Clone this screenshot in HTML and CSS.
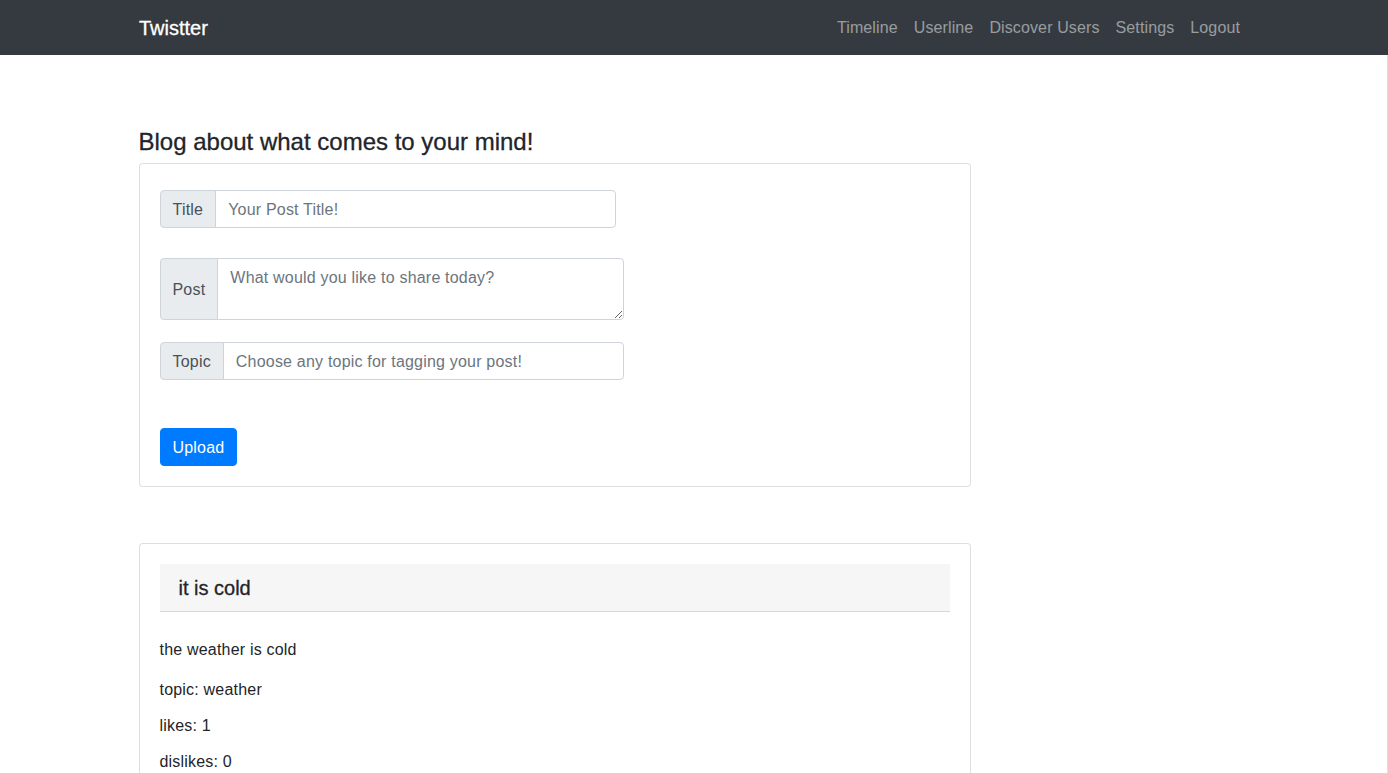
FILE: index.html
```html
<!DOCTYPE html>
<html lang="en">
<head>
<meta charset="utf-8">
<title>Twistter</title>
<link rel="stylesheet" href="styles.css">
</head>
<body>
<nav class="navbar">
  <div class="container nav-inner">
    <a class="brand" href="#">Twistter</a>
    <ul class="nav-links">
      <li><a href="#">Timeline</a></li>
      <li><a href="#">Userline</a></li>
      <li><a href="#">Discover Users</a></li>
      <li><a href="#">Settings</a></li>
      <li><a href="#">Logout</a></li>
    </ul>
  </div>
</nav>
<main class="page">
  <div class="container">
    <h4 class="page-title">Blog about what comes to your mind!</h4>
    <div class="card form-card">
      <form class="card-body post-form">
        <div class="input-group title-group">
          <span class="addon">Title</span>
          <input class="control" type="text" placeholder="Your Post Title!">
        </div>
        <div class="input-group post-group">
          <span class="addon">Post</span>
          <textarea class="control" rows="2" placeholder="What would you like to share today?"></textarea>
        </div>
        <div class="input-group topic-group">
          <span class="addon">Topic</span>
          <input class="control" type="text" placeholder="Choose any topic for tagging your post!">
        </div>
        <button class="btn-primary" type="button">Upload</button>
      </form>
    </div>
    <div class="card post-card">
      <div class="card-body">
        <div class="post-header">it is cold</div>
        <p class="post-text">the weather is cold</p>
        <div class="meta">
          <p>topic: weather</p>
          <p>likes: 1</p>
          <p>dislikes: 0</p>
        </div>
      </div>
    </div>
  </div>
</main>
</body>
</html>
```
FILE: styles.css
```css
* { box-sizing: border-box; }
html, body { margin: 0; padding: 0; }
body {
  font-family: "Liberation Sans", Arial, sans-serif;
  font-size: 16px;
  line-height: 1.5;
  color: #212529;
  background: #fff;
  overflow: hidden;
  letter-spacing: 0.2px;
}
.container {
  max-width: 1140px;
  margin: 0 auto;
  padding: 0 15px;
}
.navbar {
  background: #343a40;
  height: 55px;
}
.nav-inner {
  display: flex;
  align-items: center;
  justify-content: space-between;
  height: 55px;
}
.brand {
  color: #fff;
  text-decoration: none;
  font-size: 20px;
  line-height: 30px;
  letter-spacing: 0;
  -webkit-text-stroke: 0.3px #fff;
}
.nav-links {
  display: flex;
  list-style: none;
  margin: 0 1px 0 0;
  padding: 0;
}
.nav-links a {
  display: block;
  padding: 8px;
  color: rgba(255,255,255,.5);
  text-decoration: none;
  line-height: 24px;
  letter-spacing: 0.12px;
}
.page {
  border-right: 1px solid #dedede;
  min-height: 718px;
}
.page-title {
  margin: 0;
  padding-top: 72px;
  font-size: 24px;
  font-weight: 500;
  line-height: 29px;
  margin-bottom: 7px;
  letter-spacing: 0;
  -webkit-text-stroke: 0.3px #212529;
}
.card {
  width: 832px;
  border: 1px solid rgba(0,0,0,.125);
  border-radius: 4px;
  background: #fff;
}
.card-body { padding: 20px; }
.post-form {
  display: flex;
  flex-direction: column;
  align-items: flex-start;
}
.input-group {
  display: flex;
  align-items: stretch;
}
.title-group { width: 456px; margin-top: 6px; }
.post-group { width: 464px; margin-top: 30px; }
.topic-group { width: 464px; margin-top: 22px; }
.addon {
  display: flex;
  align-items: center;
  padding: 7px 12px 5px;
  background: #e9ecef;
  border: 1px solid #ced4da;
  border-radius: 4px 0 0 4px;
  color: #495057;
  font-size: 16px;
  line-height: 24px;
}
.control {
  flex: 1;
  min-width: 0;
  margin: 0 0 0 -1px;
  padding: 7px 12px 5px;
  border: 1px solid #ced4da;
  border-radius: 0 4px 4px 0;
  font-family: inherit;
  font-size: 16px;
  line-height: 24px;
  letter-spacing: 0.2px;
  height: 38px;
  color: #495057;
  background: #fff;
  outline: none;
}
textarea.control {
  height: 62px;
  resize: vertical;
  display: block;
}
.control::placeholder { color: #6c757d; opacity: 1; }
.btn-primary {
  margin-top: 48px;
  background: #007bff;
  border: 1px solid #007bff;
  color: #fff;
  border-radius: 4px;
  padding: 7px 12px 5px;
  font-family: inherit;
  font-size: 16px;
  line-height: 24px;
  letter-spacing: 0.2px;
  cursor: pointer;
}
.post-card { margin-top: 56px; }
.post-header {
  background: #f6f6f6;
  border-bottom: 1px solid rgba(0,0,0,.125);
  padding: 13px 19px 11px;
  font-size: 20px;
  font-weight: 500;
  line-height: 23px;
  letter-spacing: 0;
  -webkit-text-stroke: 0.3px #212529;
}
.post-text {
  margin: 26px 0 16px;
}
.meta p { margin: 0 0 12px; }
```
